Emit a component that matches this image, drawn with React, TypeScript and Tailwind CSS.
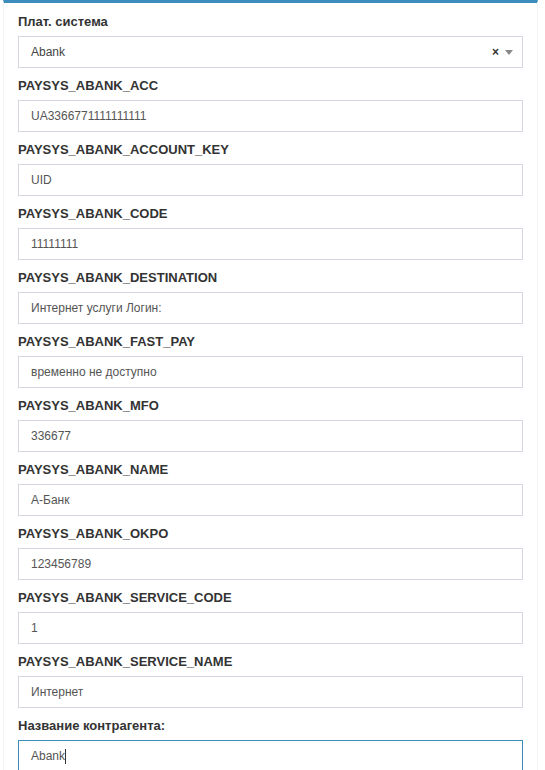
const fields: { label: string; value: string }[] = [
  { label: 'PAYSYS_ABANK_ACC', value: 'UA3366771111111111' },
  { label: 'PAYSYS_ABANK_ACCOUNT_KEY', value: 'UID' },
  { label: 'PAYSYS_ABANK_CODE', value: '11111111' },
  { label: 'PAYSYS_ABANK_DESTINATION', value: 'Интернет услуги Логин:' },
  { label: 'PAYSYS_ABANK_FAST_PAY', value: 'временно не доступно' },
  { label: 'PAYSYS_ABANK_MFO', value: '336677' },
  { label: 'PAYSYS_ABANK_NAME', value: 'А-Банк' },
  { label: 'PAYSYS_ABANK_OKPO', value: '123456789' },
  { label: 'PAYSYS_ABANK_SERVICE_CODE', value: '1' },
  { label: 'PAYSYS_ABANK_SERVICE_NAME', value: 'Интернет' },
];

const Label = ({ children }: { children: React.ReactNode }) => (
  <label className="block h-[19px] leading-[19px] mb-[5px] text-[13px] font-bold text-[#333]">{children}</label>
);

export default function App() {
  return (
    <div className="min-h-screen bg-white font-['Liberation_Sans',Arial,sans-serif]">
      <div className="ml-[3px] w-[535px] border-t-[3px] border-t-[#3c8dbc] border-x border-x-[#f4f4f4] bg-white px-[14px] pt-[9px] pb-4">
        <div className="mb-2">
          <Label>Плат. система</Label>
          <div className="flex items-center h-8 border border-[#d2d6de] pl-3 pr-[9px] text-[12px] text-[#444]">
            <span className="flex-1">Abank</span>
            <span className="text-[12px] font-bold text-[#333] mr-[6px] leading-none">×</span>
            <span className="w-0 h-0 border-x-[4px] border-x-transparent border-t-[5px] border-t-[#888]" />
          </div>
        </div>
        {fields.map((f) => (
          <div key={f.label} className="mb-2">
            <Label>{f.label}</Label>
            <div className="flex items-center h-8 border border-[#d2d6de] px-3 text-[12px] text-[#555]">{f.value}</div>
          </div>
        ))}
        <div className="mb-2">
          <Label>Название контрагента:</Label>
          <div className="flex items-center h-8 border border-[#3c8dbc] px-3 text-[12px] text-[#555]">
            Abank<span className="w-px h-[15px] bg-[#333]" />
          </div>
        </div>
      </div>
    </div>
  );
}
